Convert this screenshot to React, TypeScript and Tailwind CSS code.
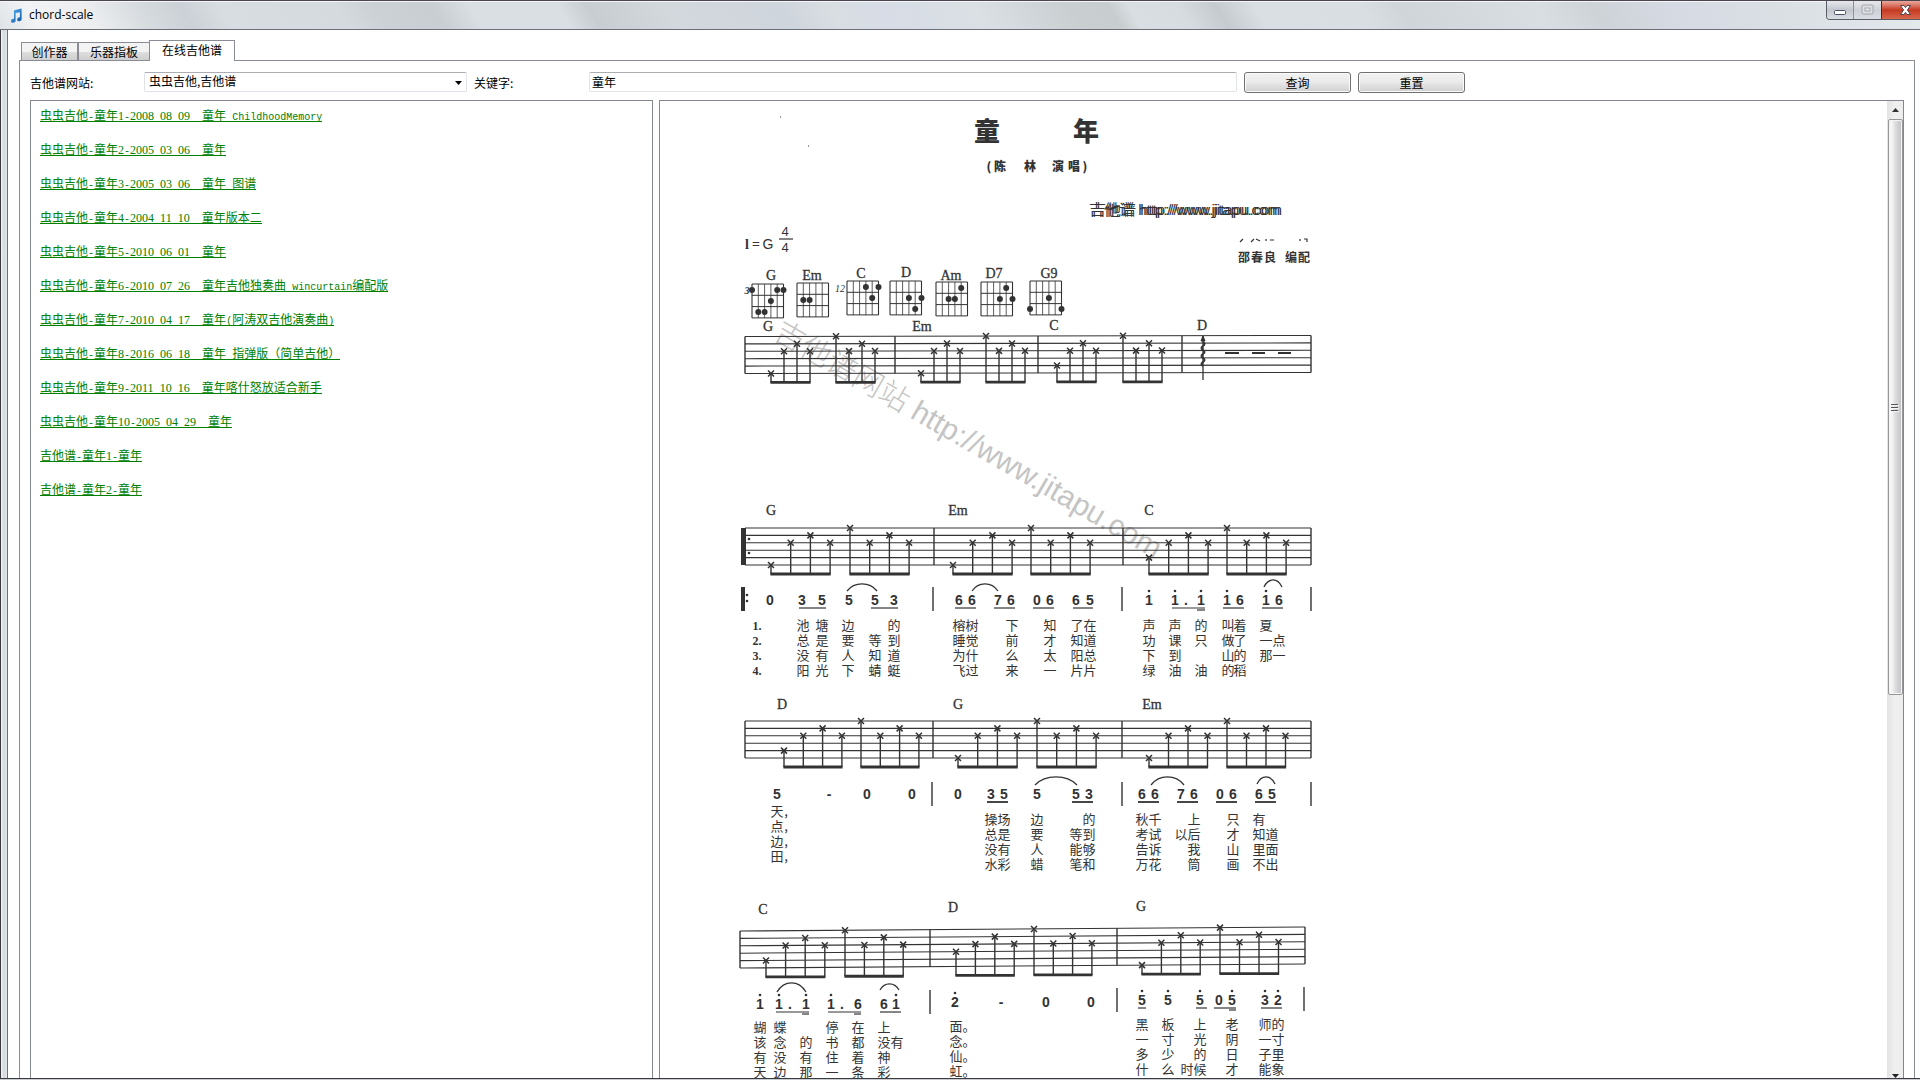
import React from "react";

const INK = "#333333";

/* ---------- window frame ---------- */

function NoteIcon() {
  return (
    <svg width="13" height="15" viewBox="0 0 13 15" aria-hidden="true">
      <defs>
        <linearGradient id="noteFill" x1="0" y1="0" x2="1" y2="1">
          <stop offset="0" stopColor="#5cb8ee" />
          <stop offset="1" stopColor="#0a4fa8" />
        </linearGradient>
      </defs>
      <path
        d="M4 2.2 11.6 0.6V10.6A2.3 1.9 -20 1 1 9.9 9.3V4.2L5.6 5.1V12.1A2.4 2 -20 1 1 4 10.7Z"
        fill="url(#noteFill)"
      />
    </svg>
  );
}

function WindowButtons() {
  return (
    <div className="flex h-[19px] self-start overflow-hidden rounded-bl-[4px] border-b border-l border-[#5a5d66]">
      <button
        aria-label="Minimize"
        className="flex w-[27px] items-center justify-center border-r border-[#8d9098] bg-linear-to-b from-[#e6e8ec] via-[#c3c7cd] to-[#dadde4]"
      >
        <svg width="13" height="12" viewBox="0 0 13 12">
          <rect x="0.5" y="6.5" width="11" height="4" rx="1" fill="#fff" stroke="#4b4f66" />
        </svg>
      </button>
      <button
        aria-label="Maximize"
        className="flex w-[27px] items-center justify-center bg-linear-to-b from-[#e6e8ec] via-[#cdd0d6] to-[#dadde4]"
      >
        <svg width="13" height="12" viewBox="0 0 13 12">
          <rect x="1" y="1" width="11" height="9" rx="1" fill="#dcdee2" stroke="#a4a7ae" />
          <rect x="4" y="4" width="5" height="3" fill="#e6e8eb" stroke="#a4a7ae" />
        </svg>
      </button>
      <button
        aria-label="Close"
        className="w-[39px] border-l border-[#6b1a12] bg-linear-to-b from-[#e9a79c] from-0% via-[#c43a20] via-50% to-[#d8664c] pl-[16px]"
      >
        <svg width="15" height="14" viewBox="0 0 15 14">
          <path
            d="M2.5 2.5H6L7.5 4.6 9 2.5H12.5L9.4 7 12.5 11.5H9L7.5 9.4 6 11.5H2.5L5.6 7Z"
            fill="#fff"
            stroke="#54414e"
          />
        </svg>
      </button>
    </div>
  );
}

function TitleBar() {
  return (
    <header className="flex h-[30px] shrink-0 border-b border-t border-b-[#6b6e76] border-t-[#4a464f] bg-[linear-gradient(60deg,#dfe3e7_0%,#f1f3f4_2%,#eceef0_5%,#d5dade_8%,#cbd1d6_10%,#d8dde1_12%,#d5dade_18%,#ccd1d6_20%,#c9ced3_23%,#d9dfe3_25%,#d9dfe2_29.5%,#c8cdd1_31%,#d2d8dc_35%,#cfd5dc_41%,#d8dee2_43.5%,#d7dce6_46%,#dae0e4_51%,#c9ced1_56%,#c8cdd0_58%,#d8dee1_59%,#d6dce0_61.5%,#c5cbcf_63.5%,#d9dfe2_65.5%,#d8dee2_71%,#cfd5d9_73%,#d9dee2_80%,#ced3d8_83%,#d6dae3_87%,#dbe0e5_93%,#e4e9ec_100%)] pl-[10px] shadow-[inset_0_1px_0_#f5f6f7]">
      <div className="flex flex-1 items-center gap-[6px]">
        <NoteIcon />
        <h1 className="font-['Open_Sans'] text-[12px] leading-4 text-black">chord-scale</h1>
      </div>
      <WindowButtons />
    </header>
  );
}

/* ---------- tabs and search form ---------- */

const tabs = [
  { label: "创作器", width: "w-[57px]" },
  { label: "乐器指板", width: "w-[72px]" },
];

function Tabs() {
  return (
    <nav role="tablist" className="flex items-end pl-[2px]">
      {tabs.map((t) => (
        <button
          key={t.label}
          role="tab"
          aria-selected="false"
          className={
            "h-[18px] border border-b-0 border-[#898c95] bg-linear-to-b from-[#f3f3f3] from-50% via-[#dfdfdf] via-50% to-[#cfcfcf] leading-4 " +
            t.width
          }
        >
          {t.label}
        </button>
      ))}
      <button
        role="tab"
        aria-selected="true"
        className="relative -mb-px -ml-px h-[21px] w-[86px] border border-b-0 border-[#898c95] bg-white pb-[2px] leading-4"
      >
        在线吉他谱
      </button>
    </nav>
  );
}

function PushButton({ children }: { children: React.ReactNode }) {
  return (
    <button className="h-[21px] w-[107px] rounded-[3px] border border-[#707070] bg-linear-to-b from-[#f2f2f2] from-0% via-[#ebebeb] via-45% to-[#cfcfcf] leading-4 shadow-[inset_0_0_0_1px_#fbfbfb]">
      {children}
    </button>
  );
}

function SearchForm() {
  return (
    <form className="flex h-5 items-start" onSubmit={(e) => e.preventDefault()}>
      <label htmlFor="site" className="w-[114px] pt-[2px] leading-[18px]">
        吉他谱网站:
      </label>
      <div className="relative mr-[7px]">
        <select
          id="site"
          className="h-5 w-[323px] appearance-none rounded-[2px] border border-[#dfe2ea] border-t-[#abadb3] bg-white pb-[2px] pl-[4px] leading-4 outline-none"
        >
          <option>虫虫吉他,吉他谱</option>
        </select>
        <svg className="pointer-events-none absolute right-[5px] top-[9px]" width="7" height="4" viewBox="0 0 7 4">
          <path d="M0 0H7L3.5 4Z" fill="#000" />
        </svg>
      </div>
      <label htmlFor="keyword" className="w-[115px] pt-[2px] leading-[18px]">
        关键字:
      </label>
      <input
        id="keyword"
        defaultValue="童年"
        className="mr-[7px] h-5 w-[648px] rounded-[2px] border border-[#e2e3ea] border-t-[#abadb3] bg-white pb-[2px] pl-[2px] outline-none"
      />
      <div className="flex gap-[7px]">
        <PushButton>查询</PushButton>
        <PushButton>重置</PushButton>
      </div>
    </form>
  );
}

/* ---------- result list ---------- */

const results = [
  "虫虫吉他-童年1-2008 08 09  童年 ChildhoodMemory",
  "虫虫吉他-童年2-2005 03 06  童年",
  "虫虫吉他-童年3-2005 03 06  童年 图谱",
  "虫虫吉他-童年4-2004 11 10  童年版本二",
  "虫虫吉他-童年5-2010 06 01  童年",
  "虫虫吉他-童年6-2010 07 26  童年吉他独奏曲 wincurtain编配版",
  "虫虫吉他-童年7-2010 04 17  童年(阿涛双吉他演奏曲)",
  "虫虫吉他-童年8-2016 06 18  童年 指弹版（简单吉他）",
  "虫虫吉他-童年9-2011 10 16  童年喀什怒放适合新手",
  "虫虫吉他-童年10-2005 04 29  童年",
  "吉他谱-童年1-童年",
  "吉他谱-童年2-童年",
];

/* Half-width characters take exactly half the advance of a Chinese one. */
function MixedText({ text }: { text: string }) {
  const runs = text.match(/[0-9]+|[\x20-\x2f\x3a-\x7e]+|[^\x20-\x7e]+/g) ?? [];
  return (
    <>
      {runs.map((run, i) => {
        if (/^[0-9]/.test(run))
          return (
            <span key={i} className="font-['Liberation_Serif']">
              {run}
            </span>
          );
        if (/^[\x20-\x7e]/.test(run))
          return (
            <span key={i} className="font-['Liberation_Mono'] text-[10px]">
              {run}
            </span>
          );
        return <span key={i}>{run}</span>;
      })}
    </>
  );
}

function ResultList() {
  return (
    <ul className="overflow-hidden border border-b-0 border-[#828790] pl-[9px] pt-[7px]">
      {results.map((r) => (
        <li key={r} className="h-[34px]">
          <a
            href="#"
            className="block h-[14px] w-fit whitespace-pre border-b border-[#008000] leading-[14px] text-[#008000]"
          >
            <MixedText text={r} />
          </a>
        </li>
      ))}
    </ul>
  );
}

/* ---------- sheet music ---------- */

const CJK = '"Noto Sans CJK SC", sans-serif';
const SERIF = '"Liberation Serif", serif';
const SANS = '"Liberation Sans", sans-serif';
const MIXED = '"Liberation Sans", "Noto Sans CJK SC", sans-serif';

/* Text centred on a point; a list of x values places one character on each. */
function Glyph({
  x,
  y,
  size = 13,
  font = CJK,
  weight = 400,
  italic = false,
  children,
}: {
  x: number | number[];
  y: number;
  size?: number;
  font?: string;
  weight?: number;
  italic?: boolean;
  children: React.ReactNode;
}) {
  return (
    <text
      x={Array.isArray(x) ? x.join(" ") : x}
      y={y + Math.round(size * 0.36)}
      textAnchor="middle"
      fontFamily={font}
      fontSize={size}
      fontWeight={weight}
      fontStyle={italic ? "italic" : "normal"}
      fill={INK}
    >
      {children}
    </text>
  );
}

function ChordName({ x, y, children }: { x: number; y: number; children: string }) {
  return (
    <text
      x={x}
      y={y + 5}
      textAnchor="middle"
      fontFamily={SERIF}
      fontSize="14"
      fill={INK}
      stroke={INK}
      strokeWidth="0.3"
    >
      {children}
    </text>
  );
}

function ChordBox({ x, y, dots }: { x: number; y: number; dots: [number, number][] }) {
  return (
    <g stroke={INK}>
      {[0, 1, 2, 3, 4, 5].map((i) => (
        <line key={"v" + i} x1={x + i * 6.3} x2={x + i * 6.3} y1={y} y2={y + 34} strokeWidth={i % 5 ? 0.8 : 1.1} />
      ))}
      {[0, 1, 2, 3].map((i) => (
        <line key={"h" + i} x1={x} x2={x + 31.5} y1={y + i * 11.3} y2={y + i * 11.3} strokeWidth="1" />
      ))}
      {dots.map(([c, r], i) => (
        <circle key={i} cx={x + c * 6.3} cy={y + 6 + r * 11} r="3" fill={INK} stroke="none" />
      ))}
    </g>
  );
}

type Group = { x: number; step: number; strings: number[] };

function Staff({
  x1,
  x2,
  y,
  slant = 0,
  bars,
  groups,
}: {
  x1: number;
  x2: number;
  y: number;
  slant?: number;
  bars: number[];
  groups: Group[];
}) {
  const top = (x: number) => y + (slant * (x - x1)) / (x2 - x1);
  const GAP = 7.4;
  return (
    <g stroke={INK} fill="none">
      {[0, 1, 2, 3, 4, 5].map((i) => (
        <line key={i} x1={x1} x2={x2} y1={y + i * GAP} y2={y + slant + i * GAP} strokeWidth="1.1" />
      ))}
      {[x1, ...bars, x2].map((x) => (
        <line key={"b" + x} x1={x} x2={x} y1={top(x)} y2={top(x) + 5 * GAP} strokeWidth="1.4" />
      ))}
      {groups.map((g, gi) => {
        const beam = top(g.x) + 46;
        return (
          <g key={gi}>
            {g.strings.map((s, i) => {
              const nx = g.x + i * g.step;
              const ny = top(nx) + s * GAP;
              return (
                <g key={i}>
                  <path d={`M${nx - 3} ${ny - 3}l6 6m0-6l-6 6`} strokeWidth="1.5" />
                  <line x1={nx} x2={nx} y1={ny} y2={beam} strokeWidth="1.4" />
                </g>
              );
            })}
            <line x1={g.x - 0.6} x2={g.x + 3 * g.step + 0.6} y1={beam} y2={beam} strokeWidth="2.8" />
          </g>
        );
      })}
    </g>
  );
}

const up = (x: number, step: number, low: number): Group => ({ x, step, strings: [low, 2, 1, 2] });
const down = (x: number, step: number): Group => ({ x, step, strings: [0, 2, 1, 2] });

/* [x, digit]; a trailing ' puts the octave dot above the digit. */
function Numbers({ y, notes }: { y: number; notes: [number, string][] }) {
  return (
    <g>
      <Glyph x={notes.map(([x]) => x)} y={y} size={14} font={SANS} weight={700}>
        {notes.map(([, n]) => n[0]).join("")}
      </Glyph>
      {notes
        .filter(([, n]) => n.length > 1)
        .map(([x]) => (
          <circle key={x} cx={x} cy={y - 9} r="1.3" fill={INK} />
        ))}
    </g>
  );
}

function Rules({ y, spans, width = 1.2 }: { y: number; spans: [number, number][]; width?: number }) {
  return (
    <g stroke={INK} strokeWidth={width}>
      {spans.map(([a, b]) => (
        <line key={a} x1={a} x2={b} y1={y} y2={y} />
      ))}
    </g>
  );
}

function Ties({ y, rise, spans }: { y: number; rise: number; spans: [number, number][] }) {
  return (
    <g stroke={INK} fill="none" strokeWidth="1.3">
      {spans.map(([a, b]) => (
        <path key={a} d={`M${a} ${y}C${a + (b - a) * 0.25} ${y - rise * 1.35} ${b - (b - a) * 0.25} ${y - rise * 1.35} ${b} ${y}`} />
      ))}
    </g>
  );
}

function Bars({ y, xs }: { y: number; xs: number[] }) {
  return (
    <g stroke={INK} strokeWidth="1.4">
      {xs.map((x) => (
        <line key={x} x1={x} x2={x} y1={y} y2={y + 24} />
      ))}
    </g>
  );
}

/* One character per column; an ideographic space leaves the column empty. */
function Lyrics({ y, columns, rows }: { y: number; columns: number[]; rows: string[] }) {
  return (
    <g>
      {rows.map((row, r) => {
        const cells = [...row].map((ch, c) => ({ ch, x: columns[c] })).filter(({ ch }) => ch !== "　");
        return (
          <Glyph key={r} x={cells.map((c) => c.x)} y={y + r * 15} size={13}>
            {cells.map((c) => c.ch).join("")}
          </Glyph>
        );
      })}
    </g>
  );
}

function SheetMusic() {
  return (
    <svg className="ml-[60px] shrink-0" width="620" height="979" viewBox="720 101 620 979" aria-label="童年">
      <text x="772" y="338" transform="rotate(30 772 338)" fontSize="30" fill="#c4c4c4" fontWeight="300" fontFamily={MIXED}>
        吉他谱网站 http://www.jitapu.com
      </text>

      <Glyph x={[987, 1086]} y={132} size={26} weight={900}>
        童年
      </Glyph>
      <Glyph x={[989, 1000, 1030, 1058, 1074, 1085]} y={167} size={12} weight={900}>
        (陈林演唱)
      </Glyph>
      <g fontFamily={MIXED} fontSize="15" fill={INK}>
        <text x="1089" y="215">吉他谱 http://www.jitapu.com</text>
        <text x="1091" y="215" aria-hidden="true">吉他谱 http://www.jitapu.com</text>
      </g>

      <Glyph x={747} y={244} size={14} font={SERIF} weight={700}>l</Glyph>
      <Glyph x={756} y={244} size={14} font={SERIF} weight={700}>=</Glyph>
      <Glyph x={768} y={244} size={14} font={SANS}>G</Glyph>
      <Glyph x={785} y={231} size={13} font={SANS}>4</Glyph>
      <Glyph x={785} y={247} size={13} font={SANS}>4</Glyph>
      <Rules y={239} spans={[[779, 793]]} />

      <g stroke={INK} strokeWidth="1.2" fill="none">
        <path d="M1243 239l-3 3M1254 239l-3 3M1256 239l4 2M1266 239v2M1270 240h4M1300 239v2M1304 239h3v3" />
        <path d="M780 117h1M808 146h1" strokeWidth="1" />
      </g>
      <Glyph x={[1244, 1257, 1270, 1291, 1304]} y={258} size={12} weight={700}>
        邵春良编配
      </Glyph>

      {/* chord diagrams */}
      <ChordName x={771} y={275}>G</ChordName>
      <ChordName x={812} y={275}>Em</ChordName>
      <ChordName x={861} y={273}>C</ChordName>
      <ChordName x={906} y={272}>D</ChordName>
      <ChordName x={951} y={275}>Am</ChordName>
      <ChordName x={994} y={273}>D7</ChordName>
      <ChordName x={1049} y={273}>G9</ChordName>
      <Glyph x={747} y={290} size={10} font={SERIF} italic weight={700}>3</Glyph>
      <Glyph x={840} y={288} size={10} font={SERIF} italic>12</Glyph>
      <ChordBox x={752} y={284} dots={[[0, 0], [4, 0], [5, 0], [3, 1], [1, 2], [2, 2]]} />
      <ChordBox x={797} y={283} dots={[[1, 1], [2, 1]]} />
      <ChordBox x={847} y={281} dots={[[3, 0], [5, 0], [4, 1]]} />
      <ChordBox x={890} y={281} dots={[[3, 1], [5, 1], [4, 2]]} />
      <ChordBox x={936} y={282} dots={[[4, 0], [2, 1], [3, 1]]} />
      <ChordBox x={981} y={282} dots={[[4, 0], [3, 1], [5, 1]]} />
      <ChordBox x={1030} y={281} dots={[[3, 1], [0, 2], [5, 2]]} />

      {/* intro */}
      <ChordName x={768} y={326}>G</ChordName>
      <ChordName x={922} y={326}>Em</ChordName>
      <ChordName x={1054} y={325}>C</ChordName>
      <ChordName x={1202} y={325}>D</ChordName>
      <Staff
        x1={745}
        x2={1311}
        y={336.5}
        slant={-1}
        bars={[895, 1038, 1182]}
        groups={[up(771, 13, 5), down(836, 13), up(921, 13, 5), down(986, 13), up(1057, 13, 4), down(1123, 13)]}
      />
      <g stroke={INK} fill="none">
        <path d="M1203 336V380" strokeWidth="1.3" />
        <path d="M1203 342q3 2 0 4t0 4q3 2 0 4t0 4q3 2 0 4t0 4" strokeWidth="2" />
        <path d="M1201 341l2-5 2 5z" fill={INK} />
      </g>
      <Rules y={353} width={2} spans={[[1225, 1239], [1252, 1265], [1278, 1291]]} />

      {/* first system */}
      <ChordName x={771} y={510}>G</ChordName>
      <ChordName x={958} y={510}>Em</ChordName>
      <ChordName x={1149} y={510}>C</ChordName>
      <Staff
        x1={745}
        x2={1311}
        y={528}
        bars={[934, 1123]}
        groups={[
          up(771, 19.7, 5),
          down(850, 19.7),
          up(953, 19.7, 5),
          down(1031, 19.7),
          up(1149, 19.7, 4),
          down(1227, 19.7),
        ]}
      />
      <g fill={INK}>
        <rect x="741" y="528" width="5" height="37" />
        <circle cx="749" cy="539" r="1.3" />
        <circle cx="749" cy="553" r="1.3" />
        <rect x="741" y="587" width="4" height="24" />
        <circle cx="747" cy="595" r="1.3" />
        <circle cx="747" cy="601" r="1.3" />
      </g>
      <Bars y={587} xs={[933, 1122, 1311]} />
      <Numbers
        y={600}
        notes={[
          [770, "0"], [802, "3"], [822, "5"], [849, "5"], [875, "5"], [894, "3"],
          [959, "6"], [972, "6"], [998, "7"], [1011, "6"], [1037, "0"], [1050, "6"], [1076, "6"], [1090, "5"],
          [1149, "1'"], [1175, "1'"], [1186, "."], [1201, "1'"], [1227, "1'"], [1240, "6"], [1266, "1'"], [1279, "6"],
        ]}
      />
      <Rules
        y={608}
        spans={[[799, 826], [871, 898], [955, 976], [994, 1015], [1033, 1054], [1073, 1093], [1172, 1205], [1223, 1244], [1262, 1283]]}
      />
      <Rules y={610} spans={[[1197, 1205]]} />
      <Ties y={591} rise={7} spans={[[847, 877], [972, 998]]} />
      <Ties y={587} rise={7} spans={[[1264, 1282]]} />
      {[1, 2, 3, 4].map((n) => (
        <Glyph key={n} x={757} y={611 + n * 15} size={12} font={SERIF} weight={700}>
          {n + "."}
        </Glyph>
      ))}
      <Lyrics
        y={625}
        columns={[803, 822, 848, 875, 894, 959, 972, 1012, 1050, 1077, 1090, 1149, 1175, 1201, 1228, 1240, 1266, 1279]}
        rows={[
          "池塘边　的榕树下知了在声声的叫着夏　",
          "总是要等到睡觉前才知道功课只做了一点",
          "没有人知道为什么太阳总下到　山的那一",
          "阳光下蜻蜓飞过来一片片绿油油的稻　　",
        ]}
      />

      {/* second system */}
      <ChordName x={782} y={704}>D</ChordName>
      <ChordName x={958} y={704}>G</ChordName>
      <ChordName x={1152} y={704}>Em</ChordName>
      <Staff
        x1={745}
        x2={1311}
        y={721}
        bars={[933, 1122]}
        groups={[
          up(784, 19.3, 4),
          down(861, 19.3),
          up(958, 19.7, 5),
          down(1037, 19.7),
          up(1149, 19.5, 5),
          down(1227, 19.5),
        ]}
      />
      <Bars y={782} xs={[932, 1122, 1311]} />
      <Numbers
        y={794}
        notes={[
          [777, "5"], [829, "-"], [867, "0"], [912, "0"],
          [958, "0"], [991, "3"], [1004, "5"], [1037, "5"], [1076, "5"], [1089, "3"],
          [1142, "6"], [1155, "6"], [1181, "7"], [1194, "6"], [1220, "0"], [1233, "6"], [1259, "6"], [1272, "5"],
        ]}
      />
      <Rules
        y={802}
        width={1.8}
        spans={[[987, 1008], [1072, 1093], [1138, 1159], [1177, 1198], [1216, 1237], [1255, 1276]]}
      />
      <Ties y={785} rise={8} spans={[[1035, 1077], [1151, 1184]]} />
      <Ties y={784} rise={7} spans={[[1257, 1275]]} />
      <Lyrics y={811} columns={[777, 786]} rows={["天,", "点,", "边,", "田,"]} />
      <Lyrics
        y={819}
        columns={[991, 1004, 1037, 1076, 1089, 1142, 1155, 1181, 1194, 1233, 1259, 1272]}
        rows={["操场边　的秋千　上只有　", "总是要等到考试以后才知道", "没有人能够告诉　我山里面", "水彩蜡笔和万花　筒画不出"]}
      />

      {/* third system */}
      <ChordName x={763} y={909}>C</ChordName>
      <ChordName x={953} y={907}>D</ChordName>
      <ChordName x={1141} y={906}>G</ChordName>
      <Staff
        x1={740}
        x2={1305}
        y={931}
        slant={-4}
        bars={[930, 1117]}
        groups={[
          up(766, 19.6, 4),
          down(845, 19.4),
          up(956, 19.4, 3),
          down(1034, 19.3),
          up(1142, 19.4, 5),
          down(1220, 19.5),
        ]}
      />
      <Bars y={990} xs={[930]} />
      <Bars y={988} xs={[1117]} />
      <Bars y={987} xs={[1304]} />
      <Numbers
        y={1004}
        notes={[
          [760, "1'"], [779, "1'"], [790, "."], [806, "1'"], [831, "1'"], [842, "."], [858, "6"], [884, "6"], [896, "1'"],
        ]}
      />
      <Numbers y={1002} notes={[[955, "2'"], [1001, "-"], [1046, "0"], [1091, "0"]]} />
      <Numbers
        y={1000}
        notes={[[1142, "5'"], [1168, "5'"], [1200, "5'"], [1219, "0"], [1232, "5'"], [1265, "3'"], [1278, "2'"]]}
      />
      <Rules y={1012} spans={[[776, 809], [828, 861], [880, 901]]} />
      <Rules y={1014} spans={[[802, 809], [854, 861]]} />
      <Rules y={1008} spans={[[1138, 1146], [1196, 1207], [1214, 1236], [1261, 1282]]} />
      <Rules y={1010} spans={[[1229, 1236]]} />
      <Ties y={992} rise={9} spans={[[777, 806]]} />
      <Ties y={990} rise={6} spans={[[880, 899]]} />
      <Lyrics
        y={1027}
        columns={[760, 780, 806, 832, 858, 884, 897]}
        rows={["蝴蝶　停在上　", "该念的书都没有", "有没有住着神　", "天边那一条彩　"]}
      />
      <Lyrics y={1026} columns={[956, 969]} rows={["面。", "念。", "仙。", "虹。"]} />
      <Lyrics
        y={1024}
        columns={[1142, 1168, 1187, 1200, 1232, 1265, 1278]}
        rows={["黑板　上老师的", "一寸　光阴一寸", "多少　的日子里", "什么时候才能象"]}
      />
    </svg>
  );
}

function ScrollBar() {
  return (
    <div className="flex w-4 shrink-0 flex-col items-center bg-linear-to-r from-[#e3e3e3] via-[#f0f0f0] to-[#ededed]">
      <div className="flex h-[18px] items-center justify-center">
        <svg width="7" height="4" viewBox="0 0 7 4">
          <path d="M0 4H7L3.5 0Z" fill="#333" />
        </svg>
      </div>
      <div className="flex h-[59%] w-[15px] items-center justify-center rounded-[2px] border border-[#979797] bg-linear-to-r from-[#f5f5f5] from-20% via-[#dcdcdf] via-50% to-[#c0c0c5] shadow-[inset_0_0_0_1px_#f4f4f4]">
        <svg width="8" height="9" viewBox="0 0 8 9">
          <path d="M0 1.5H7M0 4.5H7M0 7.5H7" stroke="#55565a" />
          <path d="M0 2.5H8M0 5.5H8M0 8.5H8" stroke="#f4f4f4" />
        </svg>
      </div>
      <div className="mt-auto">
        <svg className="block" width="7" height="4" viewBox="0 0 7 4">
          <path d="M0 0H7L3.5 4Z" fill="#222" />
        </svg>
      </div>
    </div>
  );
}

/* ---------- page ---------- */

export default function App() {
  return (
    <div className="flex h-screen flex-col overflow-hidden bg-white font-['Noto_Sans_CJK_SC',sans-serif] text-[12px] text-black">
      <TitleBar />
      <div className="flex min-h-0 flex-1">
        <div className="w-2 shrink-0 border-l border-r border-l-[#3c3b42] border-r-[#6b6e76] bg-linear-to-r from-[#f2f3f5] via-[#d3d8df] to-[#e6e8ec]" />
        <main className="flex min-w-0 flex-1 flex-col pl-[11px] pr-[5px] pt-[10px]">
          <Tabs />
          <section className="flex min-h-0 flex-1 flex-col border border-b-0 border-[#898c95] px-[10px] pt-[11px]">
            <SearchForm />
            <div className="mt-2 grid min-h-0 flex-1 grid-cols-[1fr_2fr] gap-[6px]">
              <ResultList />
              <div className="flex min-w-0 overflow-hidden border border-b-0 border-[#828790]">
                <div className="flex min-w-0 flex-1 items-start overflow-hidden">
                  <SheetMusic />
                </div>
                <ScrollBar />
              </div>
            </div>
          </section>
        </main>
      </div>
      <footer className="h-[2px] shrink-0 border-t border-[#3a3b3f] bg-[#c9ccd1]" />
    </div>
  );
}
